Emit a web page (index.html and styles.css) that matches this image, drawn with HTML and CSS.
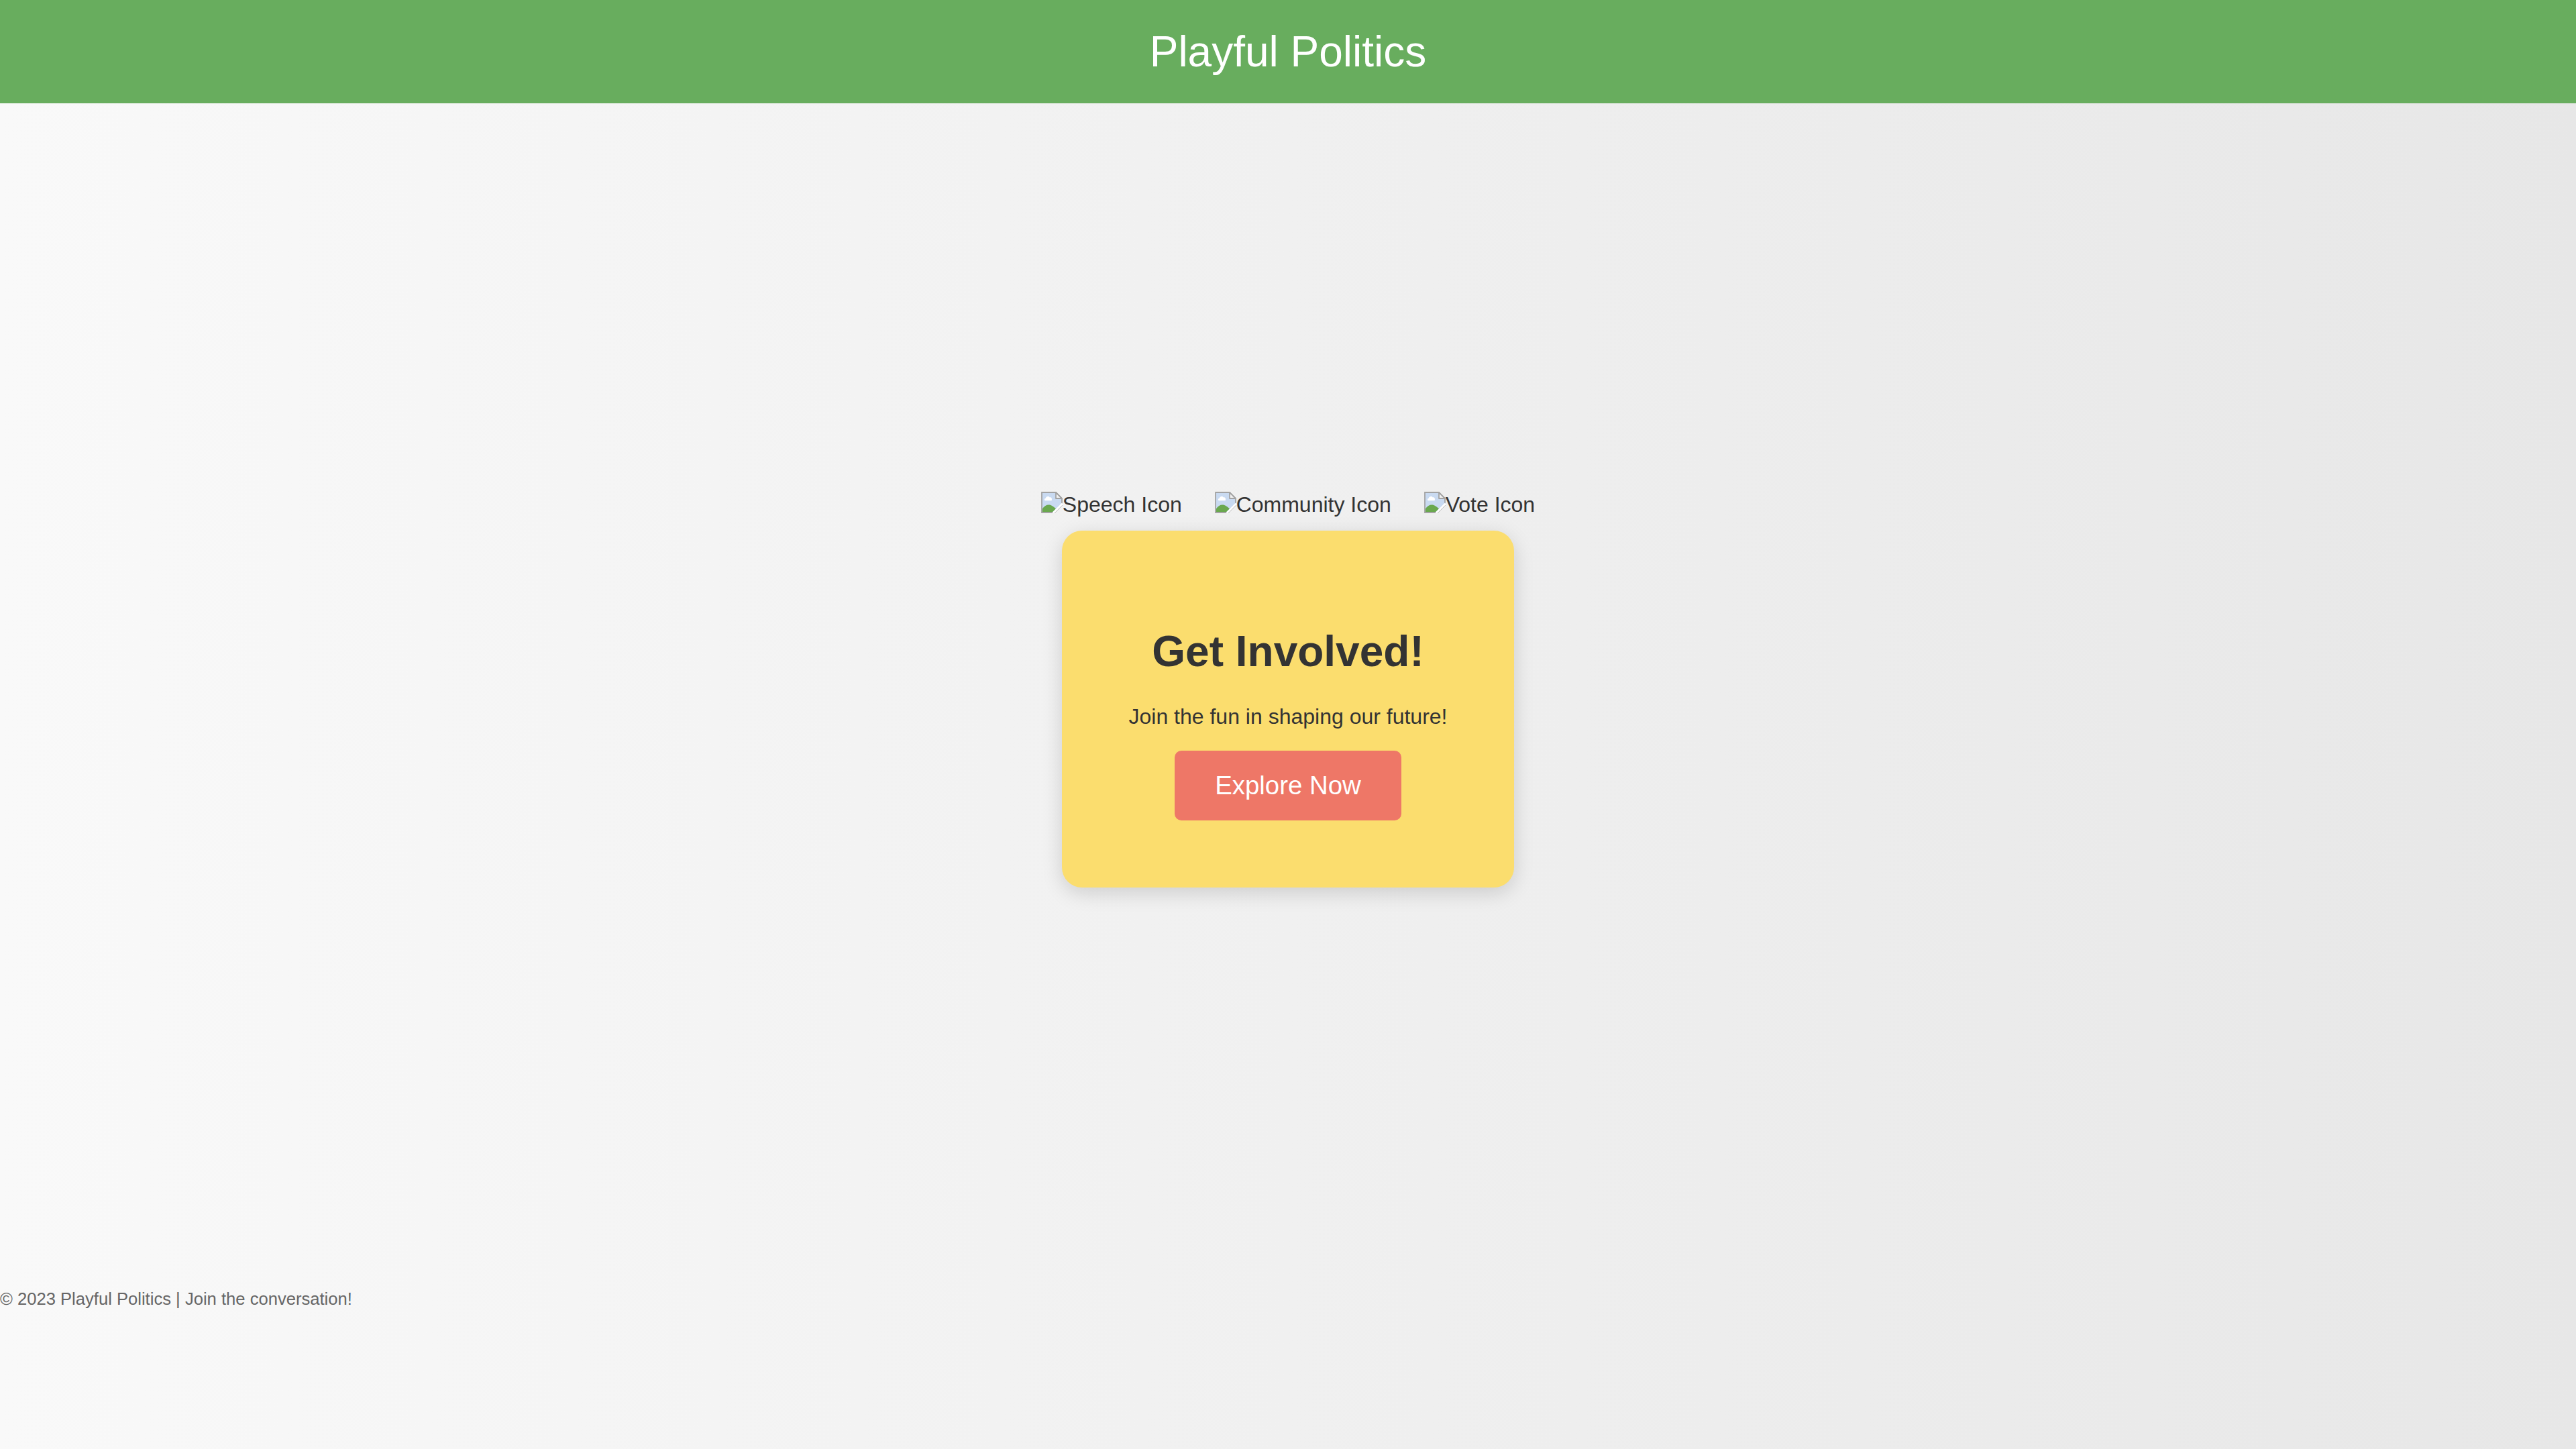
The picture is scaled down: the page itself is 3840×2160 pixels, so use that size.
FILE: index.html
```html
<!DOCTYPE html>
<html lang="en">
<head>
<meta charset="utf-8">
<title>Playful Politics</title>
<link rel="stylesheet" href="styles.css">
</head>
<body>
<header class="site-header">
  <h1 class="site-title">Playful Politics</h1>
</header>
<main class="main">
  <div class="icons">
    <span class="icon-item"><svg class="broken-icon" viewBox="0 0 16 16" aria-hidden="true"><path d="M0.5 0.5H11L15.5 5V10L10 15.5H0.5Z" fill="#c9daf1" stroke="#a3a3a3" stroke-width="0.9"/><path d="M3 6.6C2.2 6.4 2.3 5 3.4 4.9C3.6 3.4 5.6 3 6.4 4.2C7.6 3.9 8.4 5.2 7.8 6.6Z" fill="#fff"/><path d="M1 15V12.6C2.6 10.2 4.8 9.3 6.8 9.9C8.4 10.4 9.5 11.5 11 12.6L8.6 15Z" fill="#6aa84f"/><path d="M11 0.6V5H15.4Z" fill="#f2f2f2" stroke="#a3a3a3" stroke-width="0.9" stroke-linejoin="round"/><path d="M8.8 16L16 8.8" stroke="#ffffff" stroke-width="1.4"/></svg>Speech Icon</span>
    <span class="icon-item"><svg class="broken-icon" viewBox="0 0 16 16" aria-hidden="true"><path d="M0.5 0.5H11L15.5 5V10L10 15.5H0.5Z" fill="#c9daf1" stroke="#a3a3a3" stroke-width="0.9"/><path d="M3 6.6C2.2 6.4 2.3 5 3.4 4.9C3.6 3.4 5.6 3 6.4 4.2C7.6 3.9 8.4 5.2 7.8 6.6Z" fill="#fff"/><path d="M1 15V12.6C2.6 10.2 4.8 9.3 6.8 9.9C8.4 10.4 9.5 11.5 11 12.6L8.6 15Z" fill="#6aa84f"/><path d="M11 0.6V5H15.4Z" fill="#f2f2f2" stroke="#a3a3a3" stroke-width="0.9" stroke-linejoin="round"/><path d="M8.8 16L16 8.8" stroke="#ffffff" stroke-width="1.4"/></svg>Community Icon</span>
    <span class="icon-item"><svg class="broken-icon" viewBox="0 0 16 16" aria-hidden="true"><path d="M0.5 0.5H11L15.5 5V10L10 15.5H0.5Z" fill="#c9daf1" stroke="#a3a3a3" stroke-width="0.9"/><path d="M3 6.6C2.2 6.4 2.3 5 3.4 4.9C3.6 3.4 5.6 3 6.4 4.2C7.6 3.9 8.4 5.2 7.8 6.6Z" fill="#fff"/><path d="M1 15V12.6C2.6 10.2 4.8 9.3 6.8 9.9C8.4 10.4 9.5 11.5 11 12.6L8.6 15Z" fill="#6aa84f"/><path d="M11 0.6V5H15.4Z" fill="#f2f2f2" stroke="#a3a3a3" stroke-width="0.9" stroke-linejoin="round"/><path d="M8.8 16L16 8.8" stroke="#ffffff" stroke-width="1.4"/></svg>Vote Icon</span>
  </div>
  <section class="card">
    <h2 class="card-title">Get Involved!</h2>
    <p class="card-text">Join the fun in shaping our future!</p>
    <a class="btn" href="#">Explore Now</a>
  </section>
</main>
<footer class="site-footer">
  <p class="footer-text">© 2023 Playful Politics | Join the conversation!</p>
</footer>
</body>
</html>
```

FILE: styles.css
```css
html {
  background: linear-gradient(to right, #f9f9f9, #e7e7e7);
  min-height: 100%;
}

body {
  margin: 0;
  font-family: "Liberation Sans", Arial, Helvetica, sans-serif;
  color: #333333;
  line-height: normal;
}

.site-header {
  background: #68ad5e;
  padding: 40px;
  text-align: center;
}

.site-title {
  margin: 0;
  font-size: 64px;
  font-weight: normal;
  color: #ffffff;
}

.main {
  min-height: 1728px;
  display: flex;
  flex-direction: column;
  align-items: center;
  justify-content: center;
}

.icons {
  display: flex;
  column-gap: 48.9px;
  margin: 20px 0;
  font-size: 32px;
  color: #333333;
}

.icon-item {
  white-space: nowrap;
}

.broken-icon {
  width: 32px;
  height: 32px;
  vertical-align: -2px;
}

.card {
  background: #fbdd6e;
  border-radius: 30px;
  padding: 100px;
  text-align: center;
  box-shadow: 0 8px 30px rgba(0, 0, 0, 0.15);
}

.card-title {
  margin: 42.88px 0;
  font-size: 64px;
  font-weight: bold;
  color: #333333;
}

.card-text {
  margin: 0 0 32px;
  font-size: 32px;
  color: #333333;
}

.btn {
  display: inline-block;
  background: #ee7767;
  color: #ffffff;
  font-size: 38.4px;
  padding: 30px 60px;
  border-radius: 10px;
  text-decoration: none;
}

.site-footer {
  padding: 40px 0;
}

.footer-text {
  margin: 0;
  font-size: 25.6px;
  color: #666666;
}
```
